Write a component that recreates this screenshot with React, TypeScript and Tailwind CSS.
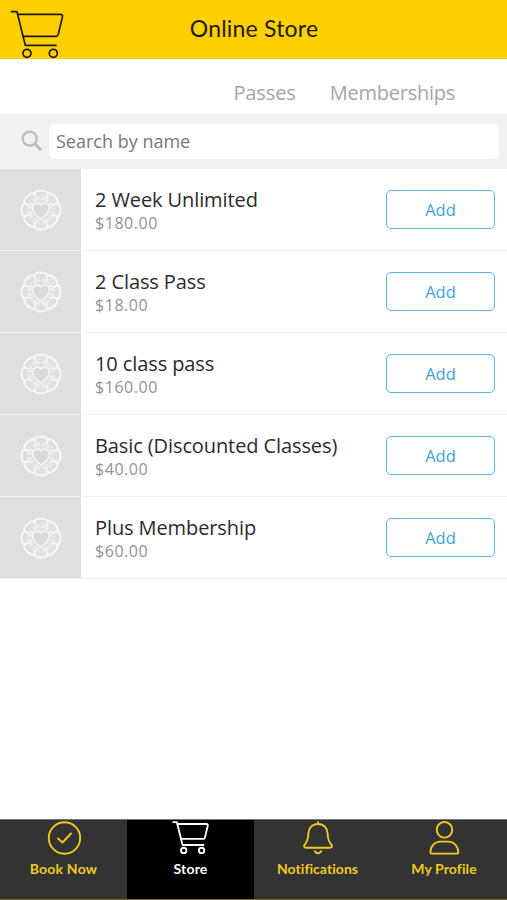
import { useState } from 'react'

interface Product {
  id: number
  name: string
  price: string
}

const products: Product[] = [
  { id: 1, name: '2 Week Unlimited', price: '$180.00' },
  { id: 2, name: '2 Class Pass', price: '$18.00' },
  { id: 3, name: '10 class pass', price: '$160.00' },
  { id: 4, name: 'Basic (Discounted Classes)', price: '$40.00' },
  { id: 5, name: 'Plus Membership', price: '$60.00' },
]

const petals = [0, 45, 90, 135, 180, 225, 270, 315]

function CartIcon({ className, strokeWidth }: { className: string; strokeWidth: number }) {
  return (
    <svg viewBox="0 0 54 50" className={className} fill="none" stroke="currentColor" strokeWidth={strokeWidth} strokeLinecap="round" strokeLinejoin="round">
      <path d="M1.5 1.7H7L15.3 35.3H46" />
      <path d="M7.7 4.4H50.5Q53 4.4 52.4 7L48.2 24.5Q47.6 26.4 45.7 26.4H13.2" />
      <circle cx="17" cy="43.3" r="4" />
      <circle cx="43.3" cy="43.3" r="4" />
    </svg>
  )
}

function Flower() {
  return (
    <svg viewBox="-21 -21 42 42" className="h-[42px] w-[42px]" fill="none" stroke="#f4f4f4" strokeLinecap="round">
      {petals.map(a => (
        <g key={a} transform={`rotate(${a})`}>
          <path d="M-6.9 -16.2C-5.6 -20.4 5.6 -20.4 6.9 -16.2" strokeWidth="2.3" />
          <path d="M-2.4 -10C-3 -12.5 -6.6 -13 -6.6 -16.5M2.4 -10C3 -12.5 6.6 -13 6.6 -16.5" strokeWidth="1.6" />
          <path d="M-1 -11L-2.2 -15M1 -11L2.2 -15" strokeWidth="0.7" />
        </g>
      ))}
      <path
        d="M0 9C-3 6.8 -8.4 3.4 -8.4 -1.8C-8.4 -7 -2.6 -8.2 0 -5C2.6 -8.2 8.4 -7 8.4 -1.8C8.4 3.4 3 6.8 0 9Z"
        fill="#dadada"
        strokeWidth="1.6"
        strokeLinejoin="round"
      />
    </svg>
  )
}

const tabs = [
  {
    label: 'Book Now',
    width: 'w-[127px]',
    spacing: 'tracking-[0.2px]',
    icon: (
      <svg viewBox="0 0 34 34" className="h-[34px] w-[34px]" fill="none" stroke="currentColor" strokeWidth="1.9" strokeLinecap="round" strokeLinejoin="round">
        <circle cx="17.5" cy="17" r="15.7" />
        <path d="M11 17.5L15.5 21.5L24 12.5" />
      </svg>
    ),
  },
  {
    label: 'Store',
    width: 'w-[127px]',
    spacing: 'tracking-[0.2px]',
    icon: <CartIcon className="h-[34px] w-[37px]" strokeWidth={2.7} />,
  },
  {
    label: 'Notifications',
    width: 'w-[127px]',
    spacing: 'tracking-[0.05px]',
    icon: (
      <svg viewBox="0 0 34 34" className="h-[34px] w-[34px]" fill="none" stroke="currentColor" strokeWidth="1.9" strokeLinecap="round" strokeLinejoin="round">
        <path d="M17 1.2V3M17 3C11.3 3 7.6 7 7.4 12.5C7.2 18.5 6 21 3.6 23.8C2.3 25.4 3.2 26.8 5 26.8H29C30.8 26.8 31.7 25.4 30.4 23.8C28 21 26.8 18.5 26.6 12.5C26.4 7 22.7 3 17 3Z" />
        <path d="M13.7 30.2Q17 34.5 20.3 30.2" />
      </svg>
    ),
  },
  {
    label: 'My Profile',
    width: 'w-[126px]',
    spacing: 'tracking-[0.1px]',
    icon: (
      <svg viewBox="0 0 34 34" className="h-[34px] w-[34px]" fill="none" stroke="currentColor" strokeWidth="1.9" strokeLinejoin="round">
        <circle cx="17.5" cy="8.8" r="7.8" />
        <path d="M5.2 32.6Q3.4 32.6 3.4 31C3.7 24.5 8.2 20.6 13.7 20.6H21C26.5 20.6 31 24.5 31.3 31Q31.3 32.6 29.5 32.6Z" />
      </svg>
    ),
  },
]

export default function App() {
  const [query, setQuery] = useState('')
  const [active, setActive] = useState('Store')

  const visible = products.filter(p => p.name.toLowerCase().includes(query.toLowerCase()))

  return (
    <div className="flex h-[900px] w-[507px] flex-col overflow-hidden bg-white font-['Open_Sans','Noto_Sans',sans-serif]">
      {/* Header */}
      <header className="grid h-[59px] shrink-0 grid-cols-[80px_1fr_80px] bg-[#ffd000] text-[#211c08]">
        <CartIcon className="mt-2.5 ml-2.5 h-[50px] w-[54px]" strokeWidth={1.7} />
        <h1 className="pt-[10px] pl-px text-center font-['Lato',sans-serif] text-[23px] leading-9 tracking-[0.2px]">Online Store</h1>
      </header>

      {/* Categories */}
      <nav className="flex h-[54.5px] shrink-0 items-start justify-end gap-[34px] pt-[20px] pr-[52px] text-[20px] leading-7 text-[#a3a6a6]">
        <button className="tracking-[-0.1px]">Passes</button>
        <button className="tracking-[-0.25px]">Memberships</button>
      </nav>

      {/* Search */}
      <div className="flex h-[55px] shrink-0 items-center bg-[#f1f1f1] pr-2 pl-[21px]">
        <svg viewBox="0 0 22 22" className="mr-1.5 h-[22px] w-[22px]" fill="none" stroke="#b5bfc2">
          <circle cx="8.7" cy="8.7" r="7" strokeWidth="2.2" />
          <path d="M14 14L20 20" strokeWidth="3" />
        </svg>
        <input
          placeholder="Search by name"
          value={query}
          onChange={e => setQuery(e.target.value)}
          className="h-[35px] min-w-0 flex-1 rounded-md bg-white px-[7px] text-[18px] text-[#777] outline-none placeholder:text-[#777]"
        />
      </div>

      {/* Products */}
      <ul className="flex-1">
        {visible.map(p => (
          <li key={p.id} className="flex h-[82px] items-center border-b border-[#f1f1f1]">
            <div className="flex h-full w-[81px] items-center justify-center bg-[#dfdfdf] pt-[2px]">
              <Flower />
            </div>
            <div className="flex-1 pt-[2px] pl-[14px]">
              <div className="text-[20px] leading-[26px] tracking-[-0.1px] text-[#2b2b2b]">{p.name}</div>
              <div className="text-[16px] leading-[21px] tracking-[0.55px] text-[#929292]">{p.price}</div>
            </div>
            <button className="mr-3 h-[39px] w-[109px] rounded-[5px] border-[1.5px] border-[#5db4e8] pt-[2px] text-[16.5px] text-[#3f9fd8]">Add</button>
          </li>
        ))}
      </ul>

      {/* Bottom bar */}
      <footer className="flex h-[81px] shrink-0 border-t border-b border-t-[#777] border-b-[#80651c] bg-[#333] font-['Lato',sans-serif]">
        {tabs.map(tab => (
          <button
            key={tab.label}
            onClick={() => setActive(tab.label)}
            className={`flex flex-col items-center pt-px ${tab.width} ${active === tab.label ? 'bg-black text-white' : 'text-[#f0cb1b]'}`}
          >
            {tab.icon}
            <span className={`mt-[3px] text-[14px] leading-[22px] font-bold whitespace-nowrap ${tab.spacing}`}>{tab.label}</span>
          </button>
        ))}
      </footer>
    </div>
  )
}
